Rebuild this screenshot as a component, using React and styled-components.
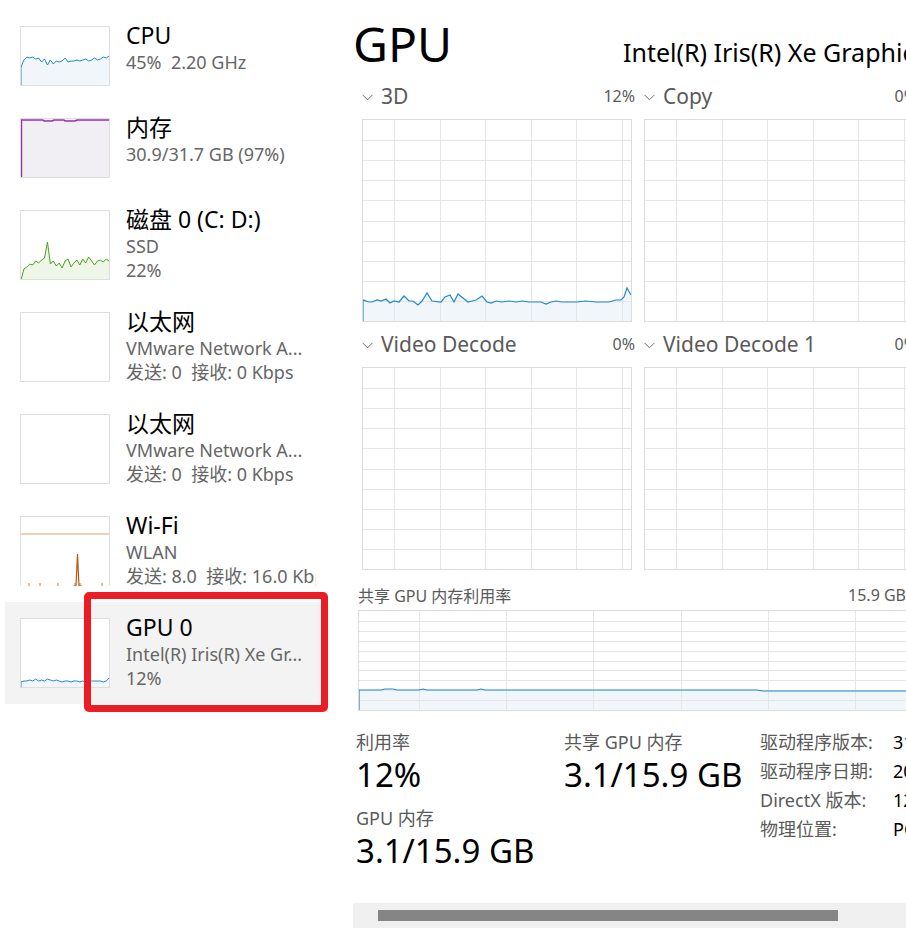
import React from 'react';
import styled, { createGlobalStyle } from 'styled-components';

const FONT = '"Noto Sans", "Noto Sans CJK SC", sans-serif';
const BLUE = '#1f88cf';
const BLUE_FILL = '#f1f6fb';

const GlobalStyle = createGlobalStyle`
	html, body {
		margin: 0;
		padding: 0;
		background: #ffffff;
		overflow: hidden;
	}
	body {
		font-family: ${FONT};
		color: #000;
	}
`;

// sidebar entries
const DEVICES = [
	{ title: 'CPU', lines: ['45%  2.20 GHz'], h: 60, kind: 'cpu' },
	{ title: '内存', lines: ['30.9/31.7 GB (97%)'], h: 60, kind: 'mem' },
	{ title: '磁盘 0 (C: D:)', lines: ['SSD', '22%'], h: 70, kind: 'disk' },
	{ title: '以太网', lines: ['VMware Network A...', '发送: 0  接收: 0 Kbps'], h: 70, kind: 'none' },
	{ title: '以太网', lines: ['VMware Network A...', '发送: 0  接收: 0 Kbps'], h: 70, kind: 'none' },
	{ title: 'Wi-Fi', lines: ['WLAN', '发送: 8.0  接收: 16.0 Kbps'], h: 70, kind: 'wifi' },
	{ title: 'GPU 0', lines: ['Intel(R) Iris(R) Xe Gr...', '12%'], h: 70, kind: 'gpu', selected: true },
];

const CPU_Y = [40, 33, 30, 31, 30, 32, 31, 35, 32, 38, 33, 37, 34, 35, 34, 31, 35, 34, 34, 33, 34, 33, 32, 34, 33, 31, 33, 32, 30, 31, 29];
const DISK_Y = [69, 58, 56, 53, 54, 50, 52, 49, 47, 31, 53, 50, 55, 52, 57, 50, 48, 56, 52, 49, 54, 48, 52, 46, 50, 54, 50, 49, 51, 48, 50];
const GPU_Y = [63, 62, 62, 61, 62, 60, 62, 61, 62, 60, 61, 62, 61, 62, 63, 62, 62, 63, 62, 62, 63, 62, 63, 62, 62, 62, 62, 62, 63, 62, 59];

const toPts = (ys, step) => ys.map((y, i) => `${Math.min(i * step, 88)},${y}`).join(' ');

const ThumbGraph = ({ kind, h }) => {
	if (kind === 'cpu' || kind === 'disk' || kind === 'gpu') {
		const ys = kind === 'cpu' ? CPU_Y : kind === 'disk' ? DISK_Y : GPU_Y;
		const stroke = kind === 'disk' ? '#4ca31c' : BLUE;
		const fill = kind === 'disk' ? '#eef6e8' : BLUE_FILL;
		const pts = toPts(ys, 2.94);
		return (
			<svg width="88" height={h - 2} viewBox={`0 0 88 ${h - 2}`}>
				<polygon points={`0,${h - 2} ${pts} 88,${h - 2}`} fill={fill} />
				<polyline points={`0,${h - 2} ${pts}`} fill="none" stroke={stroke} strokeWidth="1" />
			</svg>
		);
	}
	if (kind === 'mem') {
		return (
			<svg width="88" height={h - 2} viewBox={`0 0 88 ${h - 2}`}>
				<rect x="0" y="1" width="88" height={h - 3} fill="#f2eff4" />
				<polyline
					points={`0.5,${h - 2} 0.5,1 22,1 23,2 31,2 33,1 43,1 44,2 54,2 56,1 88,1`}
					fill="none"
					stroke="#9a2cb6"
					strokeWidth="1.4"
				/>
			</svg>
		);
	}
	if (kind === 'wifi') {
		return (
			<svg width="88" height={h - 1} viewBox={`0 0 88 ${h - 1}`}>
				<line x1="0" y1="17" x2="88" y2="17" stroke="#d9a070" strokeWidth="1" />
				<polyline points="52,69 55,69 56.5,37 58,69 61,69" fill="none" stroke="#b2570c" strokeWidth="1.2" />
				{[8, 19, 37, 54, 59, 81].map(x => (
					<line key={x} x1={x} y1="66" x2={x} y2="69" stroke="#c77a35" strokeWidth="1" />
				))}
			</svg>
		);
	}
	return null;
};

// main 3D engine graph line (x, y) in 268 x 201 space
const ENGINE_PTS = [
	[0, 180], [6, 182], [9, 182], [14, 180], [18, 181], [23, 179], [27, 183], [31, 181], [36, 182], [41, 176],
	[46, 181], [50, 181], [55, 185], [59, 181], [64, 173], [69, 181], [78, 182], [82, 177], [87, 175], [91, 182],
	[95, 174], [100, 178], [105, 182], [113, 180], [119, 176], [124, 182], [128, 183], [133, 181], [139, 182],
	[146, 181], [153, 182], [159, 181], [166, 182], [173, 182], [178, 182], [183, 184], [188, 182], [193, 181],
	[199, 182], [213, 182], [223, 181], [233, 182], [246, 182], [253, 180], [258, 180], [261, 177], [264, 168], [268, 175],
];

const SHARED_PTS = [
	[0, 79], [22, 79], [26, 78], [34, 78], [38, 79], [60, 79], [64, 78], [68, 79], [118, 79], [122, 78], [126, 79],
	[398, 79], [404, 80], [560, 80],
];

const Chart = ({ width, height, rows, firstCol, colStep, points }) => {
	const hs = [];
	for (let i = 1; i < rows; i++) hs.push(Math.round((i * height) / rows) + 0.5);
	const vs = [];
	for (let x = firstCol; x < width; x += colStep) vs.push(Math.round(x) + 0.5);
	const line = points ? points.map(p => p.join(',')).join(' ') : null;
	return (
		<svg width={width} height={height} viewBox={`0 0 ${width} ${height}`}>
			{points && <polygon points={`0,${height} ${line} ${width},${height}`} fill={BLUE_FILL} />}
			{hs.map(y => (
				<line key={`h${y}`} x1="0" y1={y} x2={width} y2={y} stroke="#e6e6e6" strokeWidth="1" />
			))}
			{vs.map(x => (
				<line key={`v${x}`} x1={x} y1="0" x2={x} y2={height} stroke="#e6e6e6" strokeWidth="1" />
			))}
			{points && <polyline points={`0,${height} ${line}`} fill="none" stroke={BLUE} strokeWidth="1.2" />}
		</svg>
	);
};

const Chevron = () => (
	<svg width="11" height="7" viewBox="0 0 11 7">
		<polyline points="0.5,0.8 5.5,5.8 10.5,0.8" fill="none" stroke="#6b6b6b" strokeWidth="1" />
	</svg>
);

const ENGINES = [
	{ name: '3D', pct: '12%', points: ENGINE_PTS },
	{ name: 'Copy', pct: '0%' },
	{ name: 'Video Decode', pct: '0%' },
	{ name: 'Video Decode 1', pct: '0%' },
];

const INFO = [
	['驱动程序版本:', '31.0.101.4255'],
	['驱动程序日期:', '2023/3/20'],
	['DirectX 版本:', '12 (FL 12.1)'],
	['物理位置:', 'PCI 总线 0、设备 2、功能 0'],
];

const App = () => (
	<Window>
		<GlobalStyle />
		<Sidebar>
			{DEVICES.map((d, i) => (
				<SideItem key={`dev-${i}`} selected={d.selected}>
					<Thumb h={d.h} open={d.kind === 'wifi'}>
						<ThumbGraph kind={d.kind} h={d.h} />
					</Thumb>
					<SideText>
						<SideTitle>{d.title}</SideTitle>
						{d.lines.map((l, j) => (
							<SideLine key={`l-${j}`}>{l}</SideLine>
						))}
					</SideText>
					{d.selected && <Highlight />}
				</SideItem>
			))}
		</Sidebar>
		<Main>
			<Content>
				<TitleRow>
					<BigTitle>GPU</BigTitle>
					<DeviceName>Intel(R) Iris(R) Xe Graphics</DeviceName>
				</TitleRow>
				<EngineGrid>
					{ENGINES.map(e => (
						<Engine key={e.name}>
							<EngineHeader>
								<Chevron />
								<EngineLabel>{e.name}</EngineLabel>
								<EnginePct>{e.pct}</EnginePct>
							</EngineHeader>
							<ChartBox>
								<Chart width={268} height={201} rows={10} firstCol={31} colStep={45.6} points={e.points} />
							</ChartBox>
						</Engine>
					))}
				</EngineGrid>
				<SharedHeader>
					<SharedLabel>共享 GPU 内存利用率</SharedLabel>
					<SharedLabel>15.9 GB</SharedLabel>
				</SharedHeader>
				<SharedBox>
					<Chart width={560} height={99} rows={10} firstCol={60} colStep={87.2} points={SHARED_PTS} />
				</SharedBox>
				<Stats>
					<StatCol>
						<StatLabel>利用率</StatLabel>
						<StatValue>12%</StatValue>
						<StatLabel>GPU 内存</StatLabel>
						<StatValue>3.1/15.9 GB</StatValue>
					</StatCol>
					<StatCol>
						<StatLabel>共享 GPU 内存</StatLabel>
						<StatValue>3.1/15.9 GB</StatValue>
					</StatCol>
					<InfoTable>
						{INFO.map(([k, v]) => (
							<React.Fragment key={k}>
								<InfoKey>{k}</InfoKey>
								<InfoVal>{v}</InfoVal>
							</React.Fragment>
						))}
					</InfoTable>
				</Stats>
			</Content>
			<ScrollTrack>
				<ScrollThumb />
			</ScrollTrack>
		</Main>
	</Window>
);

const Window = styled.div`
	display: flex;
	width: 906px;
	height: 928px;
	overflow: hidden;
	background: #ffffff;
`;

const Sidebar = styled.div`
	width: 330px;
	flex-shrink: 0;
	padding-top: 10px;
	box-sizing: border-box;
`;

const SideItem = styled.div`
	position: relative;
	display: flex;
	align-items: flex-start;
	gap: 16px;
	width: 323px;
	margin-left: 5px;
	padding: 16px 0 16px 15px;
	box-sizing: border-box;
	background: ${props => (props.selected ? '#f3f3f3' : 'transparent')};
`;

const Highlight = styled.div`
	position: absolute;
	left: 79px;
	top: -10px;
	width: 244px;
	height: 120px;
	box-sizing: border-box;
	border: 7px solid #ec1c24;
	border-radius: 5px;
	pointer-events: none;
`;

const Thumb = styled.div`
	width: 90px;
	height: ${props => props.h}px;
	flex-shrink: 0;
	box-sizing: border-box;
	border: 1px solid #dedede;
	border-bottom-color: ${props => (props.open ? 'transparent' : '#dedede')};
	background: #ffffff;
	display: flex;
	svg {
		display: block;
	}
`;

const SideText = styled.div`
	width: 190px;
	min-width: 0;
	overflow: hidden;
	margin: -6px 0 -20px;
`;

const SideTitle = styled.div`
	font-size: 23px;
	line-height: 30px;
	color: #000;
	white-space: nowrap;
`;

const SideLine = styled.div`
	font-size: 18px;
	line-height: 24px;
	color: #666666;
	white-space: pre;
`;

const Main = styled.div`
	flex: 1;
	min-width: 0;
	height: 928px;
	padding-left: 23px;
	display: flex;
	flex-direction: column;
	overflow: hidden;
`;

const Content = styled.div`
	width: 570px;
	flex: 1;
`;

const TitleRow = styled.div`
	display: grid;
	grid-template-columns: 270px auto;
	align-items: baseline;
	margin-top: 14px;
	height: 60px;
`;

const BigTitle = styled.div`
	font-size: 48px;
	line-height: 60px;
	color: #000;
`;

const DeviceName = styled.div`
	font-size: 25px;
	color: #000;
	white-space: nowrap;
`;

const EngineGrid = styled.div`
	display: grid;
	grid-template-columns: 273px 273px;
	column-gap: 9px;
	row-gap: 9px;
	margin-left: 9px;
	margin-top: 9px;
`;

const Engine = styled.div`
	display: flex;
	flex-direction: column;
`;

const EngineHeader = styled.div`
	display: flex;
	align-items: center;
	height: 26px;
	margin-bottom: 10px;
	svg {
		flex-shrink: 0;
		margin-right: 8px;
		margin-top: 2px;
	}
`;

const EngineLabel = styled.div`
	flex: 1;
	font-size: 21px;
	color: #5a5a5a;
	white-space: nowrap;
`;

const EnginePct = styled.div`
	font-size: 16px;
	color: #5a5a5a;
`;

const ChartBox = styled.div`
	width: 270px;
	height: 203px;
	box-sizing: border-box;
	border: 1px solid #dcdcdc;
	svg {
		display: block;
	}
`;

const SharedHeader = styled.div`
	display: flex;
	justify-content: space-between;
	width: 548px;
	margin: 14px 0 0 5px;
	height: 22px;
	align-items: center;
`;

const SharedLabel = styled.div`
	font-size: 16px;
	color: #5a5a5a;
	white-space: nowrap;
`;

const SharedBox = styled.div`
	width: 562px;
	height: 101px;
	margin: 4px 0 0 5px;
	box-sizing: border-box;
	border: 1px solid #dcdcdc;
	svg {
		display: block;
	}
`;

const Stats = styled.div`
	display: grid;
	grid-template-columns: 208px 196px auto;
	margin: 20px 0 0 3px;
`;

const StatCol = styled.div`
	display: flex;
	flex-direction: column;
`;

const StatLabel = styled.div`
	font-size: 18px;
	line-height: 22px;
	color: #5a5a5a;
	white-space: nowrap;
`;

const StatValue = styled.div`
	font-size: 33px;
	line-height: 44px;
	color: #000;
	white-space: nowrap;
	margin-bottom: 10px;
`;

const InfoTable = styled.div`
	display: grid;
	grid-template-columns: 133px auto;
	grid-auto-rows: 29px;
	align-items: start;
`;

const InfoKey = styled.div`
	font-size: 18px;
	line-height: 22px;
	color: #5a5a5a;
	white-space: nowrap;
`;

const InfoVal = styled.div`
	font-size: 18px;
	line-height: 22px;
	color: #000;
	white-space: nowrap;
`;

const ScrollTrack = styled.div`
	height: 25px;
	width: 570px;
	background: #f0f0f0;
	padding: 7px 0 0 25px;
	box-sizing: border-box;
	flex-shrink: 0;
`;

const ScrollThumb = styled.div`
	width: 460px;
	height: 11px;
	background: #858585;
`;

export default App;
